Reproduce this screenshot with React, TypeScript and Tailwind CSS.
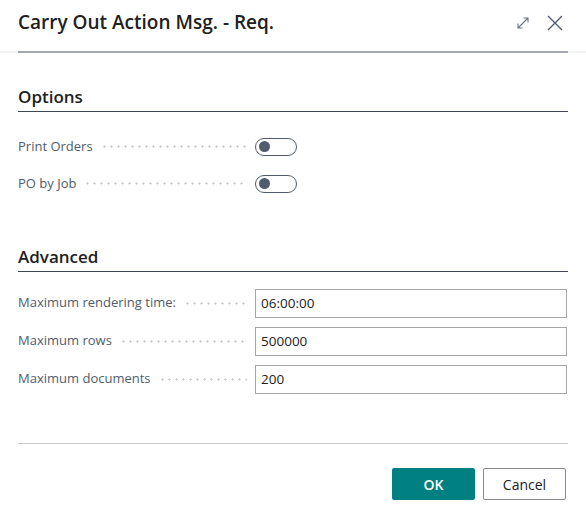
import React, { useState } from 'react';

const font = { fontFamily: '"Open Sans", "Noto Sans", sans-serif' };

const Leader = () => (
  <div className="mx-2 h-[3px] flex-1 self-center bg-[radial-gradient(circle,#c6c6c6_0.9px,transparent_1.2px)] bg-[length:7px_3px] bg-repeat-x" />
);

const Toggle: React.FC<{ on: boolean; onClick: () => void }> = ({ on, onClick }) => (
  <button
    onClick={onClick}
    className={`flex h-[18px] w-[42px] items-center rounded-full border-[1.5px] border-[#505c6d] px-[3px] ${on ? 'justify-end bg-[#008080]' : 'justify-start bg-white'}`}
  >
    <span className={`h-[11px] w-[11px] rounded-full ${on ? 'bg-white' : 'bg-[#505c6d]'}`} />
  </button>
);

const ToggleRow: React.FC<{ label: string }> = ({ label }) => {
  const [on, setOn] = useState(false);
  return (
    <div className="flex h-[37px] items-center">
      <div className="flex w-[237px] items-center">
        <span className="text-[13px] text-[#505c6d]">{label}</span>
        <Leader />
      </div>
      <Toggle on={on} onClick={() => setOn(!on)} />
    </div>
  );
};

const InputRow: React.FC<{ label: string; value: string }> = ({ label, value }) => {
  const [val, setVal] = useState(value);
  return (
    <div className="flex h-[38px] items-center">
      <div className="flex w-[237px] items-center">
        <span className="text-[13px] text-[#505c6d]">{label}</span>
        <Leader />
      </div>
      <input
        value={val}
        onChange={(e) => setVal(e.target.value)}
        className="h-[29px] flex-1 border border-[#a6a6a6] px-[5px] text-[13.5px] text-[#212121] outline-none"
      />
    </div>
  );
};

export default function App() {
  return (
    <div className="h-[517px] w-[586px] bg-white" style={font}>
      <div className="flex h-[51px] items-center justify-between pb-[6px] pl-[18px] pr-[22px]">
        <h1 className="text-[19px] font-semibold text-[#212121]">Carry Out Action Msg. - Req.</h1>
        <div className="flex items-center gap-[16px] text-[#505c6d]">
          <svg width="14" height="14" viewBox="0 0 14 14" fill="none" stroke="#6b7380" strokeWidth="1.1">
            <path d="M2 12 L12 2 M7.5 2 H12 V6.5 M2 7.5 V12 H6.5" />
          </svg>
          <svg width="18" height="18" viewBox="0 0 18 18" fill="none" stroke="#505c6d" strokeWidth="1.4">
            <path d="M2 2 L16 16 M16 2 L2 16" />
          </svg>
        </div>
      </div>
      <div className="h-[2px] bg-[#f3f3f3] px-[18px]">
        <div className="h-[2px] bg-[#a4a8b0]" />
      </div>

      <div className="px-[18px] pt-[32px]">
        <h2 className="border-b border-[#3e4653] pb-[2px] text-[17px] font-semibold leading-[24px] text-[#212121]">Options</h2>
        <div className="pt-[16px]">
          <ToggleRow label="Print Orders" />
          <ToggleRow label="PO by Job" />
        </div>

        <h2 className="mt-[43px] border-b border-[#3e4653] pb-[2px] text-[17px] font-semibold leading-[24px] text-[#212121]">Advanced</h2>
        <div className="pt-[12px] pr-px">
          <InputRow label="Maximum rendering time:" value="06:00:00" />
          <InputRow label="Maximum rows" value="500000" />
          <InputRow label="Maximum documents" value="200" />
        </div>
      </div>

      <div className="mx-[18px] mt-[45px] h-px bg-[#c8c8c8]" />
      <div className="flex justify-end gap-[8px] pr-[20px] pt-[24px]">
        <button className="h-[32px] w-[83px] rounded-[2px] bg-[#008080] text-[14px] font-semibold text-white">OK</button>
        <button className="h-[32px] w-[83px] rounded-[2px] border border-[#8a8a8a] bg-white text-[14px] text-[#212121]">Cancel</button>
      </div>
    </div>
  );
}
